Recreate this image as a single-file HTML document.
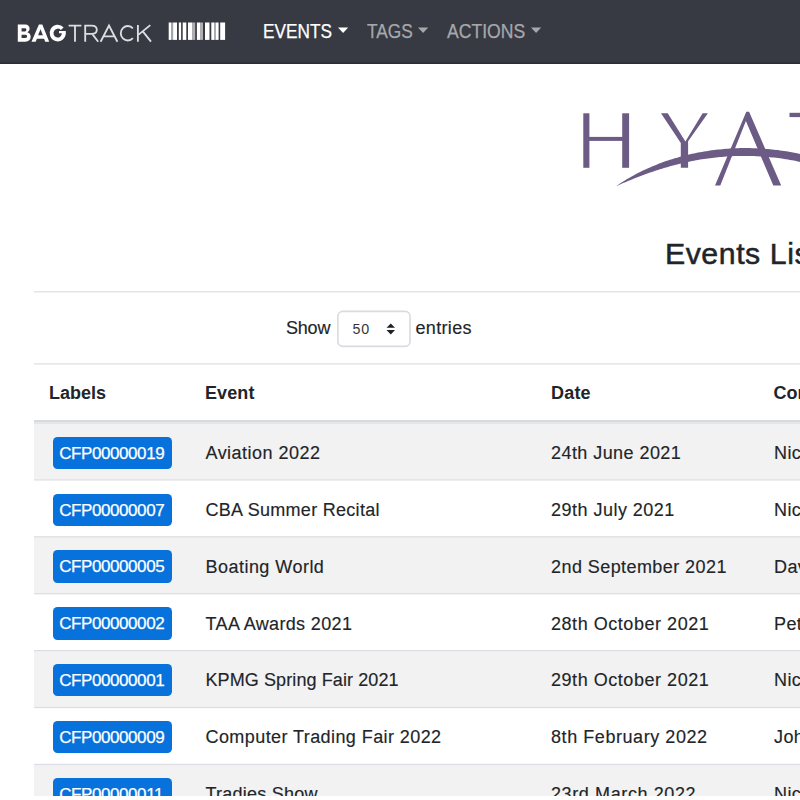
<!DOCTYPE html>
<html><head><meta charset="utf-8">
<style>
html,body{margin:0;padding:0;width:800px;height:800px;overflow:hidden;background:#fff;}
body{font-family:"Liberation Sans",sans-serif;color:#212529;position:relative;}
.nav{position:absolute;left:0;top:0;width:800px;height:63.5px;background:#373a42;box-shadow:inset 0 -1.5px 0 #2a2d33;}
.t{position:absolute;white-space:nowrap;line-height:1;}
.rg{-webkit-text-stroke:0.15px #212529;}
.hr{position:absolute;left:34px;width:766px;height:1px;background:#e3e5e8;}
.row{position:absolute;left:34px;width:766px;height:57px;border-top:1px solid #dee2e6;box-sizing:border-box;}
.row.odd{background:#f2f2f2;}
.badge{position:absolute;left:53px;width:119px;height:32.3px;background:#0872dc;border-radius:4.5px;color:#fff;font-size:17px;letter-spacing:-0.42px;line-height:33px;text-indent:6.2px;box-sizing:border-box;white-space:nowrap;-webkit-text-stroke:0.25px #fff;}
</style></head><body>
<div class="nav">
<svg width="160" height="63" style="position:absolute;left:0;top:0">
<path fill="#fff" fill-rule="evenodd" d="M17.8 24.6 H25.3 C28.0 24.6 29.6 26.3 29.6 28.6 C29.6 30.3 28.7 31.6 27.4 32.3 C29.3 32.9 30.7 34.5 30.7 36.8 C30.7 39.7 28.6 41.7 25.4 41.7 H17.8 Z M21.56 28.2 H25.0 C25.9 28.2 26.3 28.9 26.3 29.8 C26.3 30.7 25.9 31.4 25.0 31.4 H21.56 Z M21.56 34.75 H25.5 C26.6 34.75 27.1 35.5 27.1 36.3 C27.1 37.2 26.6 37.9 25.5 37.9 H21.56 Z"/>
<path fill="#fff" fill-rule="evenodd" d="M31.5 41.7 L38.9 24.6 H42.3 L49.2 41.7 H45.2 L44.1 38.7 H36.9 L35.7 41.7 Z M38.1 35.3 H42.9 L40.5 29.2 Z"/>
<path fill="none" stroke="#fff" stroke-width="3.9" d="M62.2 28.7 A6.15 6.4 0 1 0 63.85 33.1"/>
<rect x="59.0" y="31.0" width="6.8" height="2.25" fill="#fff"/>
<g fill="none" stroke="#dcdde0" stroke-width="1.85" stroke-linejoin="miter" stroke-miterlimit="10">
<path d="M68.6 25.55 H81.4 M75.0 25.55 V41.7"/>
<path d="M85.2 41.7 V25.55 H91.4 C95.0 25.55 96.8 27.4 96.8 29.75 C96.8 32.2 95.0 33.9 91.6 33.9 H85.2 M92.2 33.9 L98.2 41.7"/>
<path d="M100.6 41.7 L109.0 25.6 L117.4 41.7 M103.5 36.4 H114.5"/>
<path d="M132.9 28.3 A7.0 7.25 0 1 0 132.9 38.2"/>
<path d="M137.9 25.1 V41.7 M150.3 25.1 L138.6 34.6 M142.6 31.2 L151.0 41.7"/>
</g>
</svg>
<svg width="800" height="63" style="position:absolute;left:0;top:0"><rect x="168.7" y="22.5" width="2.4" height="17.4" fill="#fff" fill-opacity="1"/><rect x="171.1" y="22.5" width="2.0" height="17.4" fill="#fff" fill-opacity="0.55"/><rect x="173.1" y="22.5" width="3.9" height="17.4" fill="#fff" fill-opacity="1"/><rect x="178.8" y="22.5" width="2.3" height="17.4" fill="#fff" fill-opacity="1"/><rect x="182.7" y="22.5" width="3.6" height="17.4" fill="#fff" fill-opacity="1"/><rect x="188.0" y="22.5" width="4.2" height="17.4" fill="#fff" fill-opacity="1"/><rect x="192.2" y="22.5" width="3.0" height="17.4" fill="#fff" fill-opacity="0.6"/><rect x="196.9" y="22.5" width="3.2" height="17.4" fill="#fff" fill-opacity="1"/><rect x="200.1" y="22.5" width="2.9" height="17.4" fill="#fff" fill-opacity="0.6"/><rect x="205.0" y="22.5" width="4.5" height="17.4" fill="#fff" fill-opacity="1"/><rect x="211.3" y="22.5" width="2.8" height="17.4" fill="#fff" fill-opacity="1"/><rect x="214.1" y="22.5" width="1.7" height="17.4" fill="#fff" fill-opacity="0.6"/><rect x="215.8" y="22.5" width="2.8" height="17.4" fill="#fff" fill-opacity="1"/><rect x="220.2" y="22.5" width="4.9" height="17.4" fill="#fff" fill-opacity="1"/></svg><div class="t" style="left:263px;top:22.3px;font-size:19.3px;letter-spacing:0px;font-weight:normal;color:#fff;transform:scaleX(0.893);transform-origin:0 0;-webkit-text-stroke:0.25px #fff;">EVENTS</div>
<svg width="12" height="8" style="position:absolute;left:337.9px;top:27px"><path d="M0 0.5 L10.2 0.5 L5.1 5.9 Z" fill="#fff"/></svg><div class="t" style="left:366.7px;top:22.3px;font-size:19.3px;letter-spacing:0px;font-weight:normal;color:#a6a8ac;transform:scaleX(0.896);transform-origin:0 0;-webkit-text-stroke:0.25px #a6a8ac;">TAGS</div>
<svg width="12" height="8" style="position:absolute;left:418.09999999999997px;top:27px"><path d="M0 0.5 L10.2 0.5 L5.1 5.9 Z" fill="#a6a8ac"/></svg><div class="t" style="left:446.7px;top:22.3px;font-size:19.3px;letter-spacing:0px;font-weight:normal;color:#a6a8ac;transform:scaleX(0.912);transform-origin:0 0;-webkit-text-stroke:0.25px #a6a8ac;">ACTIONS</div>
<svg width="12" height="8" style="position:absolute;left:531.1999999999999px;top:27px"><path d="M0 0.5 L10.2 0.5 L5.1 5.9 Z" fill="#a6a8ac"/></svg>
</div>
<svg width="800" height="230" style="position:absolute;left:0;top:0" fill="#6b5b85">
  <rect x="583.3" y="113.3" width="6.1" height="54.5"/>
  <rect x="622.2" y="113.3" width="6.9" height="54.5"/>
  <rect x="589" y="136.9" width="34" height="4"/>
  <path d="M661 113.3 L667.75 113.3 L685.4 141.4 L702.6 113.3 L707.9 113.3 L688.1 141.3 L688.1 167.8 L680.8 167.8 L680.8 143 Z"/>
  <path d="M746.3 111.8 L749.1 111.8 L781.2 185.5 L773.3 185.5 L745.9 121.1 L720.3 185.5 L715 185.5 Z"/>
  <rect x="789.5" y="112.8" width="20" height="4.3"/>
  <path d="M616.0 186.3 L618.0 184.9 L620.0 183.5 L622.0 182.3 L624.0 181.0 L626.0 179.8 L628.0 178.6 L630.0 177.4 L632.0 176.3 L634.0 175.2 L636.0 174.1 L638.0 173.0 L640.0 172.0 L642.0 171.0 L644.0 170.1 L646.0 169.2 L648.0 168.2 L650.0 167.4 L652.0 166.5 L654.0 165.7 L656.0 164.9 L658.0 164.1 L660.0 163.3 L662.0 162.6 L664.0 161.8 L666.0 161.1 L668.0 160.5 L670.0 159.8 L672.0 159.2 L674.0 158.5 L676.0 157.9 L678.0 157.4 L680.0 156.8 L682.0 156.3 L684.0 155.7 L686.0 155.2 L688.0 154.7 L690.0 154.3 L692.0 153.8 L694.0 153.4 L696.0 153.0 L698.0 152.6 L700.0 152.2 L702.0 151.9 L704.0 151.5 L706.0 151.2 L708.0 150.9 L710.0 150.6 L712.0 150.3 L714.0 150.0 L716.0 149.8 L718.0 149.6 L720.0 149.4 L722.0 149.2 L724.0 149.0 L726.0 148.8 L728.0 148.7 L730.0 148.5 L732.0 148.4 L734.0 148.3 L736.0 148.2 L738.0 148.2 L740.0 148.1 L742.0 148.1 L744.0 148.1 L746.0 148.1 L748.0 148.1 L750.0 148.1 L752.0 148.2 L754.0 148.2 L756.0 148.3 L758.0 148.4 L760.0 148.5 L762.0 148.6 L764.0 148.7 L766.0 148.9 L768.0 149.1 L770.0 149.2 L772.0 149.4 L774.0 149.7 L776.0 149.9 L778.0 150.1 L780.0 150.4 L782.0 150.7 L784.0 151.0 L786.0 151.3 L788.0 151.6 L790.0 151.9 L792.0 152.3 L794.0 152.7 L796.0 153.1 L798.0 153.5 L800.0 153.9 L802.0 154.3 L804.0 154.8 L806.0 155.3 L808.0 155.8 L810.0 156.3 L812.0 156.8 L814.0 157.3 L814.0 165.3 L812.0 164.8 L810.0 164.2 L808.0 163.7 L806.0 163.2 L804.0 162.8 L802.0 162.3 L800.0 161.9 L798.0 161.4 L796.0 161.0 L794.0 160.6 L792.0 160.3 L790.0 159.9 L788.0 159.6 L786.0 159.2 L784.0 158.9 L782.0 158.6 L780.0 158.3 L778.0 158.1 L776.0 157.8 L774.0 157.6 L772.0 157.4 L770.0 157.2 L768.0 157.0 L766.0 156.8 L764.0 156.7 L762.0 156.5 L760.0 156.4 L758.0 156.3 L756.0 156.2 L754.0 156.1 L752.0 156.0 L750.0 156.0 L748.0 156.0 L746.0 155.9 L744.0 155.9 L742.0 155.9 L740.0 156.0 L738.0 156.0 L736.0 156.1 L734.0 156.1 L732.0 156.2 L730.0 156.3 L728.0 156.4 L726.0 156.6 L724.0 156.7 L722.0 156.9 L720.0 157.0 L718.0 157.2 L716.0 157.4 L714.0 157.7 L712.0 157.9 L710.0 158.2 L708.0 158.4 L706.0 158.7 L704.0 159.0 L702.0 159.3 L700.0 159.6 L698.0 160.0 L696.0 160.3 L694.0 160.7 L692.0 161.1 L690.0 161.5 L688.0 161.9 L686.0 162.3 L684.0 162.8 L682.0 163.2 L680.0 163.7 L678.0 164.2 L676.0 164.7 L674.0 165.2 L672.0 165.8 L670.0 166.3 L668.0 166.9 L666.0 167.5 L664.0 168.0 L662.0 168.7 L660.0 169.3 L658.0 169.9 L656.0 170.6 L654.0 171.2 L652.0 171.9 L650.0 172.6 L648.0 173.3 L646.0 174.0 L644.0 174.8 L642.0 175.5 L640.0 176.3 L638.0 177.0 L636.0 177.8 L634.0 178.6 L632.0 179.4 L630.0 180.2 L628.0 181.1 L626.0 181.9 L624.0 182.8 L622.0 183.6 L620.0 184.5 L618.0 185.4 L616.0 186.3 Z"/>
</svg>
<div class="t" style="left:664.9px;top:239.3px;font-size:30.3px;letter-spacing:0.55px;font-weight:normal;color:#212529;-webkit-text-stroke:0.5px #212529;">Events List</div>

<svg width="800" height="800" style="position:absolute;left:0;top:0"><rect x="34" y="291.0" width="766" height="1.5" fill="#e5e5e8"/><rect x="34" y="363.15" width="766" height="1.5" fill="#e4e4e7"/></svg>
<div class="t" style="left:286px;top:318.5px;font-size:18px;letter-spacing:-0.2px;font-weight:normal;color:#212529;-webkit-text-stroke:0.15px #212529;">Show</div>

<svg width="800" height="400" style="position:absolute;left:0;top:0"><rect x="337.9" y="311.4" width="72.1" height="35" rx="4.8" fill="none" stroke="#d8dbdf" stroke-width="1.6"/></svg>
<div class="t" style="left:352.5px;top:321.7px;font-size:14.3px;letter-spacing:0.8px;font-weight:normal;color:#33373b;">50</div>

<svg width="14" height="14" style="position:absolute;left:385px;top:323px"><path d="M1.5 4.8 L5.75 0.4 L10 4.8 Z M1.5 7.0 L5.75 11.5 L10 7.0 Z" fill="#1d2024"/></svg>
<div class="t" style="left:415.5px;top:318.5px;font-size:18px;letter-spacing:0.33px;font-weight:normal;color:#212529;-webkit-text-stroke:0.15px #212529;">entries</div>


<div class="t" style="left:49px;top:384.3px;font-size:18px;letter-spacing:0px;font-weight:bold;color:#212529;">Labels</div>

<div class="t" style="left:205px;top:384.3px;font-size:18px;letter-spacing:0.1px;font-weight:bold;color:#212529;">Event</div>

<div class="t" style="left:551px;top:384.3px;font-size:18px;letter-spacing:0.2px;font-weight:bold;color:#212529;">Date</div>

<div class="t" style="left:773.5px;top:384.3px;font-size:18px;letter-spacing:0px;font-weight:bold;color:#212529;">Contact</div>


<svg width="800" height="800" style="position:absolute;left:0;top:0"><rect x="34" y="423.00" width="766" height="56.9" fill="#f2f2f2"/><rect x="34" y="479.30" width="766" height="1.25" fill="#dddee3"/><rect x="34" y="536.80" width="766" height="56.9" fill="#f2f2f2"/><rect x="34" y="536.20" width="766" height="1.25" fill="#dddee3"/><rect x="34" y="593.10" width="766" height="1.25" fill="#dddee3"/><rect x="34" y="650.60" width="766" height="56.9" fill="#f2f2f2"/><rect x="34" y="650.00" width="766" height="1.25" fill="#dddee3"/><rect x="34" y="706.90" width="766" height="1.25" fill="#dddee3"/><rect x="34" y="764.40" width="766" height="56.9" fill="#f2f2f2"/><rect x="34" y="763.80" width="766" height="1.25" fill="#dddee3"/><rect x="34" y="420.1" width="766" height="2.2" fill="#d6dadd"/><rect x="34" y="422.3" width="766" height="1.4" fill="#dde0e3"/></svg>
<div class="badge" style="top:436.6px">CFP00000019</div>
<div class="t" style="left:205.5px;top:443.8px;font-size:18px;letter-spacing:0.47px;font-weight:normal;color:#212529;-webkit-text-stroke:0.15px #212529;">Aviation 2022</div>
<div class="t" style="left:551px;top:443.8px;font-size:18px;letter-spacing:0.44px;font-weight:normal;color:#212529;-webkit-text-stroke:0.15px #212529;">24th June 2021</div>
<div class="t" style="left:774px;top:443.8px;font-size:18px;letter-spacing:0.4px;font-weight:normal;color:#212529;-webkit-text-stroke:0.15px #212529;">Nic</div>
<div class="badge" style="top:493.5px">CFP00000007</div>
<div class="t" style="left:205.5px;top:500.7px;font-size:18px;letter-spacing:0.29px;font-weight:normal;color:#212529;-webkit-text-stroke:0.15px #212529;">CBA Summer Recital</div>
<div class="t" style="left:551px;top:500.7px;font-size:18px;letter-spacing:0.48px;font-weight:normal;color:#212529;-webkit-text-stroke:0.15px #212529;">29th July 2021</div>
<div class="t" style="left:774px;top:500.7px;font-size:18px;letter-spacing:0.4px;font-weight:normal;color:#212529;-webkit-text-stroke:0.15px #212529;">Nic</div>
<div class="badge" style="top:550.4px">CFP00000005</div>
<div class="t" style="left:205.5px;top:557.5999999999999px;font-size:18px;letter-spacing:0.47px;font-weight:normal;color:#212529;-webkit-text-stroke:0.15px #212529;">Boating World</div>
<div class="t" style="left:551px;top:557.5999999999999px;font-size:18px;letter-spacing:0.43px;font-weight:normal;color:#212529;-webkit-text-stroke:0.15px #212529;">2nd September 2021</div>
<div class="t" style="left:774px;top:557.5999999999999px;font-size:18px;letter-spacing:0.4px;font-weight:normal;color:#212529;-webkit-text-stroke:0.15px #212529;">Dav</div>
<div class="badge" style="top:607.3000000000001px">CFP00000002</div>
<div class="t" style="left:205.5px;top:614.5px;font-size:18px;letter-spacing:0.36px;font-weight:normal;color:#212529;-webkit-text-stroke:0.15px #212529;">TAA Awards 2021</div>
<div class="t" style="left:551px;top:614.5px;font-size:18px;letter-spacing:0.54px;font-weight:normal;color:#212529;-webkit-text-stroke:0.15px #212529;">28th October 2021</div>
<div class="t" style="left:774px;top:614.5px;font-size:18px;letter-spacing:0.4px;font-weight:normal;color:#212529;-webkit-text-stroke:0.15px #212529;">Pet</div>
<div class="badge" style="top:664.2px">CFP00000001</div>
<div class="t" style="left:205.5px;top:671.4px;font-size:18px;letter-spacing:0.1px;font-weight:normal;color:#212529;-webkit-text-stroke:0.15px #212529;">KPMG Spring Fair 2021</div>
<div class="t" style="left:551px;top:671.4px;font-size:18px;letter-spacing:0.54px;font-weight:normal;color:#212529;-webkit-text-stroke:0.15px #212529;">29th October 2021</div>
<div class="t" style="left:774px;top:671.4px;font-size:18px;letter-spacing:0.4px;font-weight:normal;color:#212529;-webkit-text-stroke:0.15px #212529;">Nic</div>
<div class="badge" style="top:721.1px">CFP00000009</div>
<div class="t" style="left:205.5px;top:728.3px;font-size:18px;letter-spacing:0.42px;font-weight:normal;color:#212529;-webkit-text-stroke:0.15px #212529;">Computer Trading Fair 2022</div>
<div class="t" style="left:551px;top:728.3px;font-size:18px;letter-spacing:0.56px;font-weight:normal;color:#212529;-webkit-text-stroke:0.15px #212529;">8th February 2022</div>
<div class="t" style="left:774px;top:728.3px;font-size:18px;letter-spacing:0.4px;font-weight:normal;color:#212529;-webkit-text-stroke:0.15px #212529;">Joh</div>
<div class="badge" style="top:778.0px">CFP00000011</div>
<div class="t" style="left:205.5px;top:785.1999999999999px;font-size:18px;letter-spacing:0.23px;font-weight:normal;color:#212529;-webkit-text-stroke:0.15px #212529;">Tradies Show</div>
<div class="t" style="left:551px;top:785.1999999999999px;font-size:18px;letter-spacing:0.61px;font-weight:normal;color:#212529;-webkit-text-stroke:0.15px #212529;">23rd March 2022</div>
<div class="t" style="left:774px;top:785.1999999999999px;font-size:18px;letter-spacing:0.4px;font-weight:normal;color:#212529;-webkit-text-stroke:0.15px #212529;">Nic</div>

<div class="t" style="left:0;top:796px;width:800px;height:4px;background:#fff"></div>
</body></html>
